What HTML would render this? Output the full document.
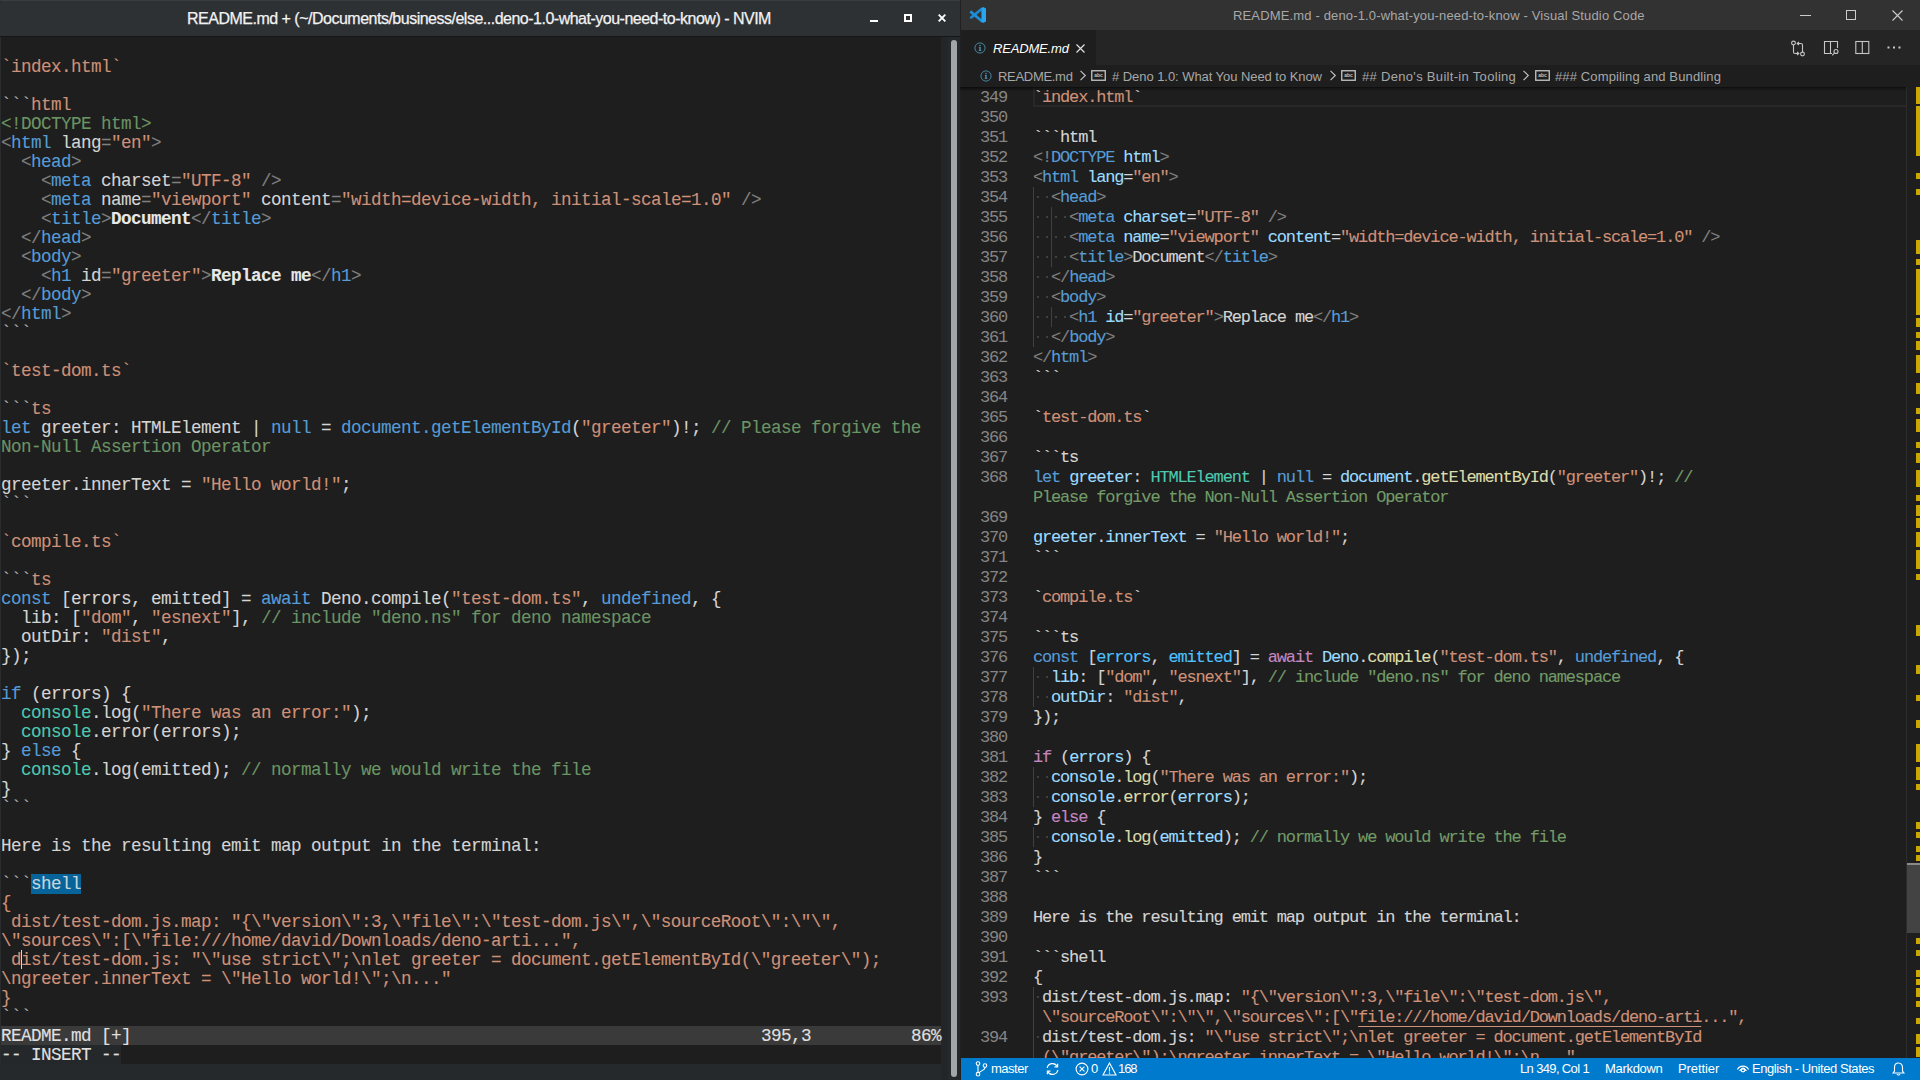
<!DOCTYPE html>
<html><head><meta charset="utf-8"><style>
*{margin:0;padding:0;box-sizing:border-box}
html,body{width:1920px;height:1080px;overflow:hidden;background:#000}
body{position:relative;font-family:"Liberation Sans",sans-serif}
.abs{position:absolute}
/* NVIM */
#nv{position:absolute;left:0;top:0;width:960px;height:1080px;background:#25292c}
#nvtitle{position:absolute;left:0;top:0;width:960px;height:36px;background:#2e3134;border-radius:4px 4px 0 0}
#nvline{position:absolute;left:0;top:36px;width:960px;height:1px;background:#141617}
#nvterm{position:absolute;left:0;top:37px;width:941px;height:1027px;background:#1e1e1e}
#nvsb{position:absolute;left:941px;top:37px;width:19px;height:1043px;background:#232629}
#nvthumb{position:absolute;left:951px;top:40px;width:6px;height:1037px;background:#a3a6a8;border-radius:3px}
#nvtxt{position:absolute;left:1px;top:39px;width:940px}
.nr{position:absolute;left:0;white-space:pre;-webkit-text-stroke-width:0.1px;font-family:"Liberation Mono",monospace;font-size:17.6px;letter-spacing:-0.56px;line-height:19px;height:19px;color:#d4d4d4}
.nd{color:#d4d4d4}.nt{color:#569cd6}.np{color:#808080}.ns{color:#ce9178}.nc{color:#6b9464}.nb{color:#e8e8e8;font-weight:bold}
.nk{color:#569cd6}.no{color:#4ec9b0}.nf{color:#b0b0b0}.nhl{background:#06649a;color:#c8d6dc}
#nvstat{position:absolute;left:0;top:1026px;width:941px;height:19px;background:#3a3a3a}
#nvins{position:absolute;left:0;top:1045px;width:941px;height:19px;background:#1e1e1e}
#nvtitletext{position:absolute;left:0;top:0;width:960px;height:36px;line-height:36px;text-align:center;color:#f0f0f0;font-size:14.5px;font-weight:bold}
/* VS */
#vs{position:absolute;left:960px;top:0;width:960px;height:1080px;background:#1e1e1e}
#vstitle{position:absolute;left:0;top:0;width:960px;height:30px;background:#323233}
#vstabs{position:absolute;left:0;top:30px;width:960px;height:35px;background:#252526}
#vstab{position:absolute;left:0;top:0;width:136px;height:35px;background:#1e1e1e}
#vscrumb{position:absolute;left:0;top:65px;width:960px;height:22px;background:#1e1e1e}
.vr{position:absolute;left:1033px;white-space:pre;-webkit-text-stroke-width:0.1px;font-family:"Liberation Mono",monospace;font-size:17px;letter-spacing:-1.1717px;line-height:20px;height:20px;color:#d4d4d4}
.ln{position:absolute;left:960px;width:47px;text-align:right;font-family:"Liberation Mono",monospace;font-size:17px;letter-spacing:-1.1717px;line-height:20px;height:20px;color:#858585}
.vd{color:#d4d4d4}.vp{color:#808080}.vt{color:#569cd6}.va{color:#9cdcfe}.vs{color:#ce9178}.vc{color:#729b68}.vy{color:#dcdcaa}.vg{color:#4ec9b0}.vk{color:#c586c0}.vb{color:#4fc1ff}
.vu{color:#ce9178;text-decoration:underline;text-underline-offset:4px}
.dot{position:absolute;width:2px;height:2px;background:#404040}
.guide{position:absolute;width:1px;background:#404040}
#vsstatus{position:absolute;left:1px;top:1058px;width:959px;height:22px;background:#007acc;color:#fff;font-size:12px}
.ui{position:absolute;white-space:pre;font-family:"Liberation Sans",sans-serif}
</style></head>
<body>
<div id="nv">
 <div id="nvtitle"></div>
 <div class="ui" id="t_nvtitle" style="left:187px;top:9px;font-size:16px;line-height:20px;letter-spacing:-0.499px;color:#f2f2f2;-webkit-text-stroke:0.25px #f2f2f2">README.md + (~/Documents/business/else...deno-1.0-what-you-need-to-know) - NVIM</div>
 <div id="nvline"></div>
 <div id="nvterm"></div>
 <div id="nvsb"></div>
 
 <div id="nvstat"></div>
 <div id="nvins"></div><div class="abs" style="left:0;top:1045px;width:121px;height:19px;background:#25282b"></div>
<div class="abs" style="left:0;top:0;width:960px;height:1px;background:#3a3d40;border-radius:3px 0 0 0"></div>
<div class="abs" style="left:0;top:37px;width:1px;height:1027px;background:#2a2b2c"></div>
<div class="abs" style="left:948px;top:37px;width:12px;height:1043px;background:#25292c"></div>
<div class="abs" style="left:870px;top:20px;width:8px;height:2px;background:#ffffff"></div>
<div class="abs" style="left:904px;top:14px;width:8px;height:8px;border:2px solid #ffffff"></div>
<svg class="abs" style="left:938px;top:14px" width="8" height="8" viewBox="0 0 8 8"><path d="M0.7 0.7 L7.3 7.3 M7.3 0.7 L0.7 7.3" stroke="#ffffff" stroke-width="1.9"/></svg>
<div class="nr" style="left:1px;top:1027px;color:#e0e0e0">README.md [+]</div>
<div class="nr" style="left:761px;top:1027px;color:#e0e0e0">395,3</div>
<div class="nr" style="left:911px;top:1027px;color:#e0e0e0">86%</div>
<div class="nr" style="left:1px;top:1046px;color:#e0e0e0">-- INSERT --</div>
<div class="abs" style="left:21px;top:950px;width:1px;height:19px;background:#d4d4d4"></div>
 <div id="nvthumb"></div>
 <div id="nvtxt">
<div class="nr" style="top:19px"><span class="ns">`</span><span class="ns">index.html</span><span class="ns">`</span></div>
<div class="nr" style="top:57px"><span class="nf">```</span><span class="ns">html</span></div>
<div class="nr" style="top:76px"><span class="nc">&lt;!DOCTYPE html&gt;</span></div>
<div class="nr" style="top:95px"><span class="np">&lt;</span><span class="nt">html</span><span class="nd"> lang</span><span class="np">=</span><span class="ns">"en"</span><span class="np">&gt;</span></div>
<div class="nr" style="top:114px"><span class="np">  &lt;</span><span class="nt">head</span><span class="np">&gt;</span></div>
<div class="nr" style="top:133px"><span class="np">    &lt;</span><span class="nt">meta</span><span class="nd"> charset</span><span class="np">=</span><span class="ns">"UTF-8"</span><span class="np"> /&gt;</span></div>
<div class="nr" style="top:152px"><span class="np">    &lt;</span><span class="nt">meta</span><span class="nd"> name</span><span class="np">=</span><span class="ns">"viewport"</span><span class="nd"> content</span><span class="np">=</span><span class="ns">"width=device-width, initial-scale=1.0"</span><span class="np"> /&gt;</span></div>
<div class="nr" style="top:171px"><span class="np">    &lt;</span><span class="nt">title</span><span class="np">&gt;</span><span class="nb">Document</span><span class="np">&lt;/</span><span class="nt">title</span><span class="np">&gt;</span></div>
<div class="nr" style="top:190px"><span class="np">  &lt;/</span><span class="nt">head</span><span class="np">&gt;</span></div>
<div class="nr" style="top:209px"><span class="np">  &lt;</span><span class="nt">body</span><span class="np">&gt;</span></div>
<div class="nr" style="top:228px"><span class="np">    &lt;</span><span class="nt">h1</span><span class="nd"> id</span><span class="np">=</span><span class="ns">"greeter"</span><span class="np">&gt;</span><span class="nb">Replace me</span><span class="np">&lt;/</span><span class="nt">h1</span><span class="np">&gt;</span></div>
<div class="nr" style="top:247px"><span class="np">  &lt;/</span><span class="nt">body</span><span class="np">&gt;</span></div>
<div class="nr" style="top:266px"><span class="np">&lt;/</span><span class="nt">html</span><span class="np">&gt;</span></div>
<div class="nr" style="top:285px"><span class="nf">```</span></div>
<div class="nr" style="top:323px"><span class="ns">`</span><span class="ns">test-dom.ts</span><span class="ns">`</span></div>
<div class="nr" style="top:361px"><span class="nf">```</span><span class="ns">ts</span></div>
<div class="nr" style="top:380px"><span class="nk">let</span><span class="nd"> greeter: HTMLElement | </span><span class="nk">null</span><span class="nd"> = </span><span class="nk">document.getElementById</span><span class="nd">(</span><span class="ns">"greeter"</span><span class="nd">)!; </span><span class="nc">// Please forgive the</span></div>
<div class="nr" style="top:399px"><span class="nc">Non-Null Assertion Operator</span></div>
<div class="nr" style="top:437px"><span class="nd">greeter.innerText = </span><span class="ns">"Hello world!"</span><span class="nd">;</span></div>
<div class="nr" style="top:456px"><span class="nf">```</span></div>
<div class="nr" style="top:494px"><span class="ns">`</span><span class="ns">compile.ts</span><span class="ns">`</span></div>
<div class="nr" style="top:532px"><span class="nf">```</span><span class="ns">ts</span></div>
<div class="nr" style="top:551px"><span class="nk">const</span><span class="nd"> [errors, emitted] = </span><span class="nk">await</span><span class="nd"> Deno.compile(</span><span class="ns">"test-dom.ts"</span><span class="nd">, </span><span class="nk">undefined</span><span class="nd">, {</span></div>
<div class="nr" style="top:570px"><span class="nd">  lib: [</span><span class="ns">"dom"</span><span class="nd">, </span><span class="ns">"esnext"</span><span class="nd">], </span><span class="nc">// include "deno.ns" for deno namespace</span></div>
<div class="nr" style="top:589px"><span class="nd">  outDir: </span><span class="ns">"dist"</span><span class="nd">,</span></div>
<div class="nr" style="top:608px"><span class="nd">});</span></div>
<div class="nr" style="top:646px"><span class="nk">if</span><span class="nd"> (errors) {</span></div>
<div class="nr" style="top:665px"><span class="nd">  </span><span class="no">console</span><span class="nd">.log(</span><span class="ns">"There was an error:"</span><span class="nd">);</span></div>
<div class="nr" style="top:684px"><span class="nd">  </span><span class="no">console</span><span class="nd">.error(errors);</span></div>
<div class="nr" style="top:703px"><span class="nd">} </span><span class="nk">else</span><span class="nd"> {</span></div>
<div class="nr" style="top:722px"><span class="nd">  </span><span class="no">console</span><span class="nd">.log(emitted); </span><span class="nc">// normally we would write the file</span></div>
<div class="nr" style="top:741px"><span class="nd">}</span></div>
<div class="nr" style="top:760px"><span class="nf">```</span></div>
<div class="nr" style="top:798px"><span class="nd">Here is the resulting emit map output in the terminal:</span></div>
<div class="nr" style="top:836px"><span class="nf">```</span><span class="nhl">shell</span></div>
<div class="nr" style="top:855px"><span class="ns">{</span></div>
<div class="nr" style="top:874px"><span class="ns"> dist/test-dom.js.map: "{\"version\":3,\"file\":\"test-dom.js\",\"sourceRoot\":\"\",</span></div>
<div class="nr" style="top:893px"><span class="ns">\"sources\":[\"file:///home/david/Downloads/deno-arti...",</span></div>
<div class="nr" style="top:912px"><span class="ns"> dist/test-dom.js: "\"use strict\";\nlet greeter = document.getElementById(\"greeter\");</span></div>
<div class="nr" style="top:931px"><span class="ns">\ngreeter.innerText = \"Hello world!\";\n..."</span></div>
<div class="nr" style="top:950px"><span class="ns">}</span></div>
<div class="nr" style="top:969px"><span class="nf">```</span></div>
 </div>
</div>
<div id="vs">
 <div id="vstitle"></div>
 <div id="vstabs"><div id="vstab"></div></div>
 <div id="vscrumb"></div>
 <div id="vsstatus"></div>
</div>
<div id="vscode" style="position:absolute;left:960px;top:87px;width:946px;height:971px;overflow:hidden">
<div style="position:absolute;left:-960px;top:-87px">
<div class="guide" style="left:1033px;top:187px;height:160px"></div>
<div class="guide" style="left:1051px;top:207px;height:60px"></div>
<div class="guide" style="left:1051px;top:307px;height:20px"></div>
<div class="guide" style="left:1033px;top:667px;height:40px"></div>
<div class="guide" style="left:1033px;top:767px;height:40px"></div>
<div class="guide" style="left:1033px;top:827px;height:20px"></div>
<div class="guide" style="left:1033px;top:987px;height:80px"></div>
<div class="dot" style="left:1036.5px;top:196px"></div>
<div class="dot" style="left:1045.5px;top:196px"></div>
<div class="dot" style="left:1036.5px;top:216px"></div>
<div class="dot" style="left:1045.5px;top:216px"></div>
<div class="dot" style="left:1054.6px;top:216px"></div>
<div class="dot" style="left:1063.6px;top:216px"></div>
<div class="dot" style="left:1036.5px;top:236px"></div>
<div class="dot" style="left:1045.5px;top:236px"></div>
<div class="dot" style="left:1054.6px;top:236px"></div>
<div class="dot" style="left:1063.6px;top:236px"></div>
<div class="dot" style="left:1036.5px;top:256px"></div>
<div class="dot" style="left:1045.5px;top:256px"></div>
<div class="dot" style="left:1054.6px;top:256px"></div>
<div class="dot" style="left:1063.6px;top:256px"></div>
<div class="dot" style="left:1036.5px;top:276px"></div>
<div class="dot" style="left:1045.5px;top:276px"></div>
<div class="dot" style="left:1036.5px;top:296px"></div>
<div class="dot" style="left:1045.5px;top:296px"></div>
<div class="dot" style="left:1036.5px;top:316px"></div>
<div class="dot" style="left:1045.5px;top:316px"></div>
<div class="dot" style="left:1054.6px;top:316px"></div>
<div class="dot" style="left:1063.6px;top:316px"></div>
<div class="dot" style="left:1036.5px;top:336px"></div>
<div class="dot" style="left:1045.5px;top:336px"></div>
<div class="dot" style="left:1036.5px;top:676px"></div>
<div class="dot" style="left:1045.5px;top:676px"></div>
<div class="dot" style="left:1036.5px;top:696px"></div>
<div class="dot" style="left:1045.5px;top:696px"></div>
<div class="dot" style="left:1036.5px;top:776px"></div>
<div class="dot" style="left:1045.5px;top:776px"></div>
<div class="dot" style="left:1036.5px;top:796px"></div>
<div class="dot" style="left:1045.5px;top:796px"></div>
<div class="dot" style="left:1036.5px;top:836px"></div>
<div class="dot" style="left:1045.5px;top:836px"></div>
<div class="dot" style="left:1036.5px;top:996px"></div>
<div class="dot" style="left:1036.5px;top:1036px"></div>
<div class="ln" style="top:88px">349</div>
<div class="ln" style="top:108px">350</div>
<div class="ln" style="top:128px">351</div>
<div class="ln" style="top:148px">352</div>
<div class="ln" style="top:168px">353</div>
<div class="ln" style="top:188px">354</div>
<div class="ln" style="top:208px">355</div>
<div class="ln" style="top:228px">356</div>
<div class="ln" style="top:248px">357</div>
<div class="ln" style="top:268px">358</div>
<div class="ln" style="top:288px">359</div>
<div class="ln" style="top:308px">360</div>
<div class="ln" style="top:328px">361</div>
<div class="ln" style="top:348px">362</div>
<div class="ln" style="top:368px">363</div>
<div class="ln" style="top:388px">364</div>
<div class="ln" style="top:408px">365</div>
<div class="ln" style="top:428px">366</div>
<div class="ln" style="top:448px">367</div>
<div class="ln" style="top:468px">368</div>
<div class="ln" style="top:508px">369</div>
<div class="ln" style="top:528px">370</div>
<div class="ln" style="top:548px">371</div>
<div class="ln" style="top:568px">372</div>
<div class="ln" style="top:588px">373</div>
<div class="ln" style="top:608px">374</div>
<div class="ln" style="top:628px">375</div>
<div class="ln" style="top:648px">376</div>
<div class="ln" style="top:668px">377</div>
<div class="ln" style="top:688px">378</div>
<div class="ln" style="top:708px">379</div>
<div class="ln" style="top:728px">380</div>
<div class="ln" style="top:748px">381</div>
<div class="ln" style="top:768px">382</div>
<div class="ln" style="top:788px">383</div>
<div class="ln" style="top:808px">384</div>
<div class="ln" style="top:828px">385</div>
<div class="ln" style="top:848px">386</div>
<div class="ln" style="top:868px">387</div>
<div class="ln" style="top:888px">388</div>
<div class="ln" style="top:908px">389</div>
<div class="ln" style="top:928px">390</div>
<div class="ln" style="top:948px">391</div>
<div class="ln" style="top:968px">392</div>
<div class="ln" style="top:988px">393</div>
<div class="ln" style="top:1028px">394</div>
<div class="vr" style="top:88px"><span class="vd">`</span><span class="vs">index.html</span><span class="vd">`</span></div>
<div class="vr" style="top:128px"><span class="vd">```html</span></div>
<div class="vr" style="top:148px"><span class="vp">&lt;!</span><span class="vt">DOCTYPE</span><span class="va"> html</span><span class="vp">&gt;</span></div>
<div class="vr" style="top:168px"><span class="vp">&lt;</span><span class="vt">html</span><span class="va"> lang</span><span class="vd">=</span><span class="vs">"en"</span><span class="vp">&gt;</span></div>
<div class="vr" style="top:188px"><span class="vp">  &lt;</span><span class="vt">head</span><span class="vp">&gt;</span></div>
<div class="vr" style="top:208px"><span class="vp">    &lt;</span><span class="vt">meta</span><span class="va"> charset</span><span class="vd">=</span><span class="vs">"UTF-8"</span><span class="vp"> /&gt;</span></div>
<div class="vr" style="top:228px"><span class="vp">    &lt;</span><span class="vt">meta</span><span class="va"> name</span><span class="vd">=</span><span class="vs">"viewport"</span><span class="va"> content</span><span class="vd">=</span><span class="vs">"width=device-width, initial-scale=1.0"</span><span class="vp"> /&gt;</span></div>
<div class="vr" style="top:248px"><span class="vp">    &lt;</span><span class="vt">title</span><span class="vp">&gt;</span><span class="vd">Document</span><span class="vp">&lt;/</span><span class="vt">title</span><span class="vp">&gt;</span></div>
<div class="vr" style="top:268px"><span class="vp">  &lt;/</span><span class="vt">head</span><span class="vp">&gt;</span></div>
<div class="vr" style="top:288px"><span class="vp">  &lt;</span><span class="vt">body</span><span class="vp">&gt;</span></div>
<div class="vr" style="top:308px"><span class="vp">    &lt;</span><span class="vt">h1</span><span class="va"> id</span><span class="vd">=</span><span class="vs">"greeter"</span><span class="vp">&gt;</span><span class="vd">Replace me</span><span class="vp">&lt;/</span><span class="vt">h1</span><span class="vp">&gt;</span></div>
<div class="vr" style="top:328px"><span class="vp">  &lt;/</span><span class="vt">body</span><span class="vp">&gt;</span></div>
<div class="vr" style="top:348px"><span class="vp">&lt;/</span><span class="vt">html</span><span class="vp">&gt;</span></div>
<div class="vr" style="top:368px"><span class="vd">```</span></div>
<div class="vr" style="top:408px"><span class="vd">`</span><span class="vs">test-dom.ts</span><span class="vd">`</span></div>
<div class="vr" style="top:448px"><span class="vd">```ts</span></div>
<div class="vr" style="top:468px"><span class="vt">let</span><span class="vd"> </span><span class="va">greeter</span><span class="vd">: </span><span class="vg">HTMLElement</span><span class="vd"> | </span><span class="vt">null</span><span class="vd"> = </span><span class="va">document</span><span class="vd">.</span><span class="vy">getElementById</span><span class="vd">(</span><span class="vs">"greeter"</span><span class="vd">)!; </span><span class="vc">//</span></div>
<div class="vr" style="top:488px"><span class="vc">Please forgive the Non-Null Assertion Operator</span></div>
<div class="vr" style="top:528px"><span class="va">greeter</span><span class="vd">.</span><span class="va">innerText</span><span class="vd"> = </span><span class="vs">"Hello world!"</span><span class="vd">;</span></div>
<div class="vr" style="top:548px"><span class="vd">```</span></div>
<div class="vr" style="top:588px"><span class="vd">`</span><span class="vs">compile.ts</span><span class="vd">`</span></div>
<div class="vr" style="top:628px"><span class="vd">```ts</span></div>
<div class="vr" style="top:648px"><span class="vt">const</span><span class="vd"> [</span><span class="vb">errors</span><span class="vd">, </span><span class="vb">emitted</span><span class="vd">] = </span><span class="vk">await</span><span class="vd"> </span><span class="va">Deno</span><span class="vd">.</span><span class="vy">compile</span><span class="vd">(</span><span class="vs">"test-dom.ts"</span><span class="vd">, </span><span class="vt">undefined</span><span class="vd">, {</span></div>
<div class="vr" style="top:668px"><span class="vd">  </span><span class="va">lib</span><span class="vd">: [</span><span class="vs">"dom"</span><span class="vd">, </span><span class="vs">"esnext"</span><span class="vd">], </span><span class="vc">// include "deno.ns" for deno namespace</span></div>
<div class="vr" style="top:688px"><span class="vd">  </span><span class="va">outDir</span><span class="vd">: </span><span class="vs">"dist"</span><span class="vd">,</span></div>
<div class="vr" style="top:708px"><span class="vd">});</span></div>
<div class="vr" style="top:748px"><span class="vk">if</span><span class="vd"> (</span><span class="va">errors</span><span class="vd">) {</span></div>
<div class="vr" style="top:768px"><span class="vd">  </span><span class="va">console</span><span class="vd">.</span><span class="vy">log</span><span class="vd">(</span><span class="vs">"There was an error:"</span><span class="vd">);</span></div>
<div class="vr" style="top:788px"><span class="vd">  </span><span class="va">console</span><span class="vd">.</span><span class="vy">error</span><span class="vd">(</span><span class="va">errors</span><span class="vd">);</span></div>
<div class="vr" style="top:808px"><span class="vd">} </span><span class="vk">else</span><span class="vd"> {</span></div>
<div class="vr" style="top:828px"><span class="vd">  </span><span class="va">console</span><span class="vd">.</span><span class="vy">log</span><span class="vd">(</span><span class="va">emitted</span><span class="vd">); </span><span class="vc">// normally we would write the file</span></div>
<div class="vr" style="top:848px"><span class="vd">}</span></div>
<div class="vr" style="top:868px"><span class="vd">```</span></div>
<div class="vr" style="top:908px"><span class="vd">Here is the resulting emit map output in the terminal:</span></div>
<div class="vr" style="top:948px"><span class="vd">```shell</span></div>
<div class="vr" style="top:968px"><span class="vd">{</span></div>
<div class="vr" style="top:988px"><span class="vd"> dist/test-dom.js.map: </span><span class="vs">"{\"version\":3,\"file\":\"test-dom.js\",</span></div>
<div class="vr" style="top:1008px"><span class="vd"> </span><span class="vs">\"sourceRoot\":\"\",\"sources\":[\"</span><span class="vu">file:///home/david/Downloads/deno-arti</span><span class="vs">...",</span></div>
<div class="vr" style="top:1028px"><span class="vd"> dist/test-dom.js: </span><span class="vs">"\"use strict\";\nlet greeter = document.getElementById</span></div>
<div class="vr" style="top:1048px"><span class="vd"> </span><span class="vs">(\"greeter\");\ngreeter.innerText = \"Hello world!\";\n..."</span></div>
</div></div>
<div class="abs" style="left:960px;top:0;width:1px;height:1080px;background:#1f2022"></div>
<svg class="abs" style="left:969px;top:7px" width="18" height="16" viewBox="0 0 18 16"><path d="M13.6 1.2 L1.3 11.3" stroke="#1c88cf" stroke-width="2.7"/><path d="M13.6 14.8 L1.3 4.4" stroke="#1e8fd6" stroke-width="2.7"/><path d="M12.4 1.3 L14.2 0.1 L17 1.5 V14.5 L14.2 15.9 L12.4 14.7 Z" fill="#27a6f0"/></svg>
<div class="ui" id="t_vstitle" style="left:1233px;top:8px;font-size:13px;line-height:16px;letter-spacing:0.151px;color:#a8a8a8;">README.md - deno-1.0-what-you-need-to-know - Visual Studio Code</div>
<div class="abs" style="left:1800px;top:15px;width:11px;height:1px;background:#cccccc"></div>
<div class="abs" style="left:1846px;top:10px;width:10px;height:10px;border:1px solid #cccccc"></div>
<svg class="abs" style="left:1892px;top:10px" width="11" height="11" viewBox="0 0 11 11"><path d="M0.5 0.5 L10.5 10.5 M10.5 0.5 L0.5 10.5" stroke="#cccccc" stroke-width="1.1"/></svg>
<svg class="abs" style="left:974px;top:42px" width="12" height="12" viewBox="0 0 16 16"><circle cx="8" cy="8" r="6.8" fill="none" stroke="#519aba" stroke-width="1.1"/><rect x="7.1" y="6.6" width="1.8" height="5.2" fill="#519aba"/><rect x="6.2" y="11" width="3.6" height="0.9" fill="#519aba"/><rect x="6.4" y="6.6" width="1.5" height="0.9" fill="#519aba"/><circle cx="8" cy="4.6" r="1" fill="#519aba"/></svg>
<div class="ui" id="t_tab" style="left:993px;top:41px;font-size:13px;line-height:16px;letter-spacing:-0.179px;color:#ffffff;font-style:italic">README.md</div>
<svg class="abs" style="left:1076px;top:44px" width="9" height="9" viewBox="0 0 9 9"><path d="M0.5 0.5 L8.5 8.5 M8.5 0.5 L0.5 8.5" stroke="#e0e0e0" stroke-width="1.2"/></svg>
<svg class="abs" style="left:1790px;top:40px" width="16" height="17" viewBox="0 0 16 17" fill="none" stroke="#c5c5c5" stroke-width="1.1"><circle cx="3.5" cy="3" r="1.9"/><circle cx="12.5" cy="14" r="1.9"/><path d="M3.5 5 V12 C3.5 13 4 13.5 5 13.5 H8.5 M7 12 L8.8 13.5 L7 15"/><path d="M12.5 12 V5 C12.5 4 12 3.5 11 3.5 H7.5 M9 2 L7.2 3.5 L9 5"/></svg>
<svg class="abs" style="left:1823px;top:40px" width="16" height="16" viewBox="0 0 16 16" fill="none" stroke="#c5c5c5" stroke-width="1.1"><path d="M7.5 1.5 H1.5 V13.5 H7.5 V1.5 H14.5 V8"/><path d="M9 13.5 H7.5"/><circle cx="13" cy="11.5" r="2"/><path d="M11.6 12.9 L9.2 15.3"/></svg>
<svg class="abs" style="left:1855px;top:40px" width="15" height="15" viewBox="0 0 15 15" fill="none" stroke="#c5c5c5" stroke-width="1.1"><rect x="0.8" y="1.5" width="13" height="12"/><path d="M7.3 1.5 V13.5"/></svg>
<svg class="abs" style="left:1887px;top:46px" width="14" height="3" viewBox="0 0 14 3" fill="#c5c5c5"><rect x="0.5" y="0.5" width="2" height="2"/><rect x="6" y="0.5" width="2" height="2"/><rect x="11.5" y="0.5" width="2" height="2"/></svg>
<svg class="abs" style="left:980px;top:70px" width="12" height="12" viewBox="0 0 16 16"><circle cx="8" cy="8" r="6.8" fill="none" stroke="#519aba" stroke-width="1.1"/><rect x="7.1" y="6.6" width="1.8" height="5.2" fill="#519aba"/><rect x="6.2" y="11" width="3.6" height="0.9" fill="#519aba"/><rect x="6.4" y="6.6" width="1.5" height="0.9" fill="#519aba"/><circle cx="8" cy="4.6" r="1" fill="#519aba"/></svg>
<div class="ui" id="t_cr1" style="left:998px;top:69px;font-size:13px;line-height:16px;letter-spacing:-0.304px;color:#a8a8a8;">README.md</div>
<div class="ui" id="t_cr2" style="left:1112px;top:69px;font-size:13px;line-height:16px;letter-spacing:-0.055px;color:#a8a8a8;"># Deno 1.0: What You Need to Know</div>
<div class="ui" id="t_cr3" style="left:1362px;top:69px;font-size:13px;line-height:16px;letter-spacing:0.312px;color:#a8a8a8;">## Deno&#39;s Built-in Tooling</div>
<div class="ui" id="t_cr4" style="left:1555px;top:69px;font-size:13px;line-height:16px;letter-spacing:0.13px;color:#a8a8a8;">### Compiling and Bundling</div>
<svg class="abs" style="left:1079px;top:70px" width="8" height="11" viewBox="0 0 8 11"><path d="M1.5 0.8 L6.3 5.5 L1.5 10.2" fill="none" stroke="#c5c5c5" stroke-width="1.1"/></svg>
<svg class="abs" style="left:1329px;top:70px" width="8" height="11" viewBox="0 0 8 11"><path d="M1.5 0.8 L6.3 5.5 L1.5 10.2" fill="none" stroke="#c5c5c5" stroke-width="1.1"/></svg>
<svg class="abs" style="left:1522px;top:70px" width="8" height="11" viewBox="0 0 8 11"><path d="M1.5 0.8 L6.3 5.5 L1.5 10.2" fill="none" stroke="#c5c5c5" stroke-width="1.1"/></svg>
<svg class="abs" style="left:1091px;top:70px" width="15" height="11" viewBox="0 0 15 11"><rect x="0.75" y="0.75" width="13.5" height="9.5" fill="none" stroke="#c5c5c5" stroke-width="1.3"/><text x="7.5" y="6.6" font-family="Liberation Sans" font-size="5" font-weight="bold" fill="#c5c5c5" text-anchor="middle">abc</text></svg>
<svg class="abs" style="left:1341px;top:70px" width="15" height="11" viewBox="0 0 15 11"><rect x="0.75" y="0.75" width="13.5" height="9.5" fill="none" stroke="#c5c5c5" stroke-width="1.3"/><text x="7.5" y="6.6" font-family="Liberation Sans" font-size="5" font-weight="bold" fill="#c5c5c5" text-anchor="middle">abc</text></svg>
<svg class="abs" style="left:1535px;top:70px" width="15" height="11" viewBox="0 0 15 11"><rect x="0.75" y="0.75" width="13.5" height="9.5" fill="none" stroke="#c5c5c5" stroke-width="1.3"/><text x="7.5" y="6.6" font-family="Liberation Sans" font-size="5" font-weight="bold" fill="#c5c5c5" text-anchor="middle">abc</text></svg>
<div class="abs" style="left:1033px;top:87px;width:873px;height:20px;border:2px solid #282828;border-right:none"></div>
<div class="abs" style="left:960px;top:87px;width:946px;height:4px;background:linear-gradient(#0c0c0c,rgba(30,30,30,0))"></div>
<div class="abs" style="left:1906px;top:87px;width:1px;height:971px;background:#2c2c2c"></div>
<div class="abs" style="left:1907px;top:863px;width:13px;height:70px;background:#434343"></div>
<div class="abs" style="left:1907px;top:863px;width:13px;height:2px;background:#8a8a8a"></div>
<div class="abs" style="left:1916px;top:87px;width:4px;height:17px;background:#cca700"></div>
<div class="abs" style="left:1916px;top:106px;width:4px;height:50px;background:#cca700"></div>
<div class="abs" style="left:1916px;top:173px;width:4px;height:6px;background:#cca700"></div>
<div class="abs" style="left:1916px;top:189px;width:4px;height:6px;background:#cca700"></div>
<div class="abs" style="left:1916px;top:240px;width:4px;height:14px;background:#cca700"></div>
<div class="abs" style="left:1916px;top:259px;width:4px;height:6px;background:#cca700"></div>
<div class="abs" style="left:1916px;top:269px;width:4px;height:46px;background:#cca700"></div>
<div class="abs" style="left:1916px;top:318px;width:4px;height:9px;background:#cca700"></div>
<div class="abs" style="left:1916px;top:332px;width:4px;height:6px;background:#cca700"></div>
<div class="abs" style="left:1916px;top:341px;width:4px;height:9px;background:#cca700"></div>
<div class="abs" style="left:1916px;top:355px;width:4px;height:18px;background:#cca700"></div>
<div class="abs" style="left:1916px;top:383px;width:4px;height:11px;background:#cca700"></div>
<div class="abs" style="left:1916px;top:408px;width:4px;height:6px;background:#cca700"></div>
<div class="abs" style="left:1916px;top:419px;width:4px;height:13px;background:#cca700"></div>
<div class="abs" style="left:1916px;top:442px;width:4px;height:6px;background:#cca700"></div>
<div class="abs" style="left:1916px;top:453px;width:4px;height:10px;background:#cca700"></div>
<div class="abs" style="left:1916px;top:470px;width:4px;height:17px;background:#cca700"></div>
<div class="abs" style="left:1916px;top:495px;width:4px;height:6px;background:#cca700"></div>
<div class="abs" style="left:1916px;top:505px;width:4px;height:11px;background:#cca700"></div>
<div class="abs" style="left:1916px;top:518px;width:4px;height:10px;background:#cca700"></div>
<div class="abs" style="left:1916px;top:532px;width:4px;height:15px;background:#cca700"></div>
<div class="abs" style="left:1916px;top:550px;width:4px;height:19px;background:#cca700"></div>
<div class="abs" style="left:1916px;top:574px;width:4px;height:6px;background:#cca700"></div>
<div class="abs" style="left:1916px;top:625px;width:4px;height:11px;background:#cca700"></div>
<div class="abs" style="left:1916px;top:665px;width:4px;height:9px;background:#cca700"></div>
<div class="abs" style="left:1916px;top:695px;width:4px;height:6px;background:#cca700"></div>
<div class="abs" style="left:1916px;top:720px;width:4px;height:8px;background:#cca700"></div>
<div class="abs" style="left:1916px;top:744px;width:4px;height:18px;background:#cca700"></div>
<div class="abs" style="left:1916px;top:767px;width:4px;height:13px;background:#cca700"></div>
<div class="abs" style="left:1916px;top:784px;width:4px;height:6px;background:#cca700"></div>
<div class="abs" style="left:1916px;top:822px;width:4px;height:7px;background:#cca700"></div>
<div class="abs" style="left:1916px;top:832px;width:4px;height:6px;background:#cca700"></div>
<div class="abs" style="left:1916px;top:846px;width:4px;height:6px;background:#cca700"></div>
<div class="abs" style="left:1916px;top:855px;width:4px;height:6px;background:#cca700"></div>
<div class="abs" style="left:1916px;top:938px;width:4px;height:6px;background:#cca700"></div>
<div class="abs" style="left:1916px;top:950px;width:4px;height:6px;background:#cca700"></div>
<div class="abs" style="left:1916px;top:970px;width:4px;height:7px;background:#cca700"></div>
<div class="abs" style="left:1916px;top:979px;width:4px;height:6px;background:#cca700"></div>
<div class="abs" style="left:1916px;top:988px;width:4px;height:9px;background:#cca700"></div>
<div class="abs" style="left:1916px;top:1001px;width:4px;height:6px;background:#cca700"></div>
<div class="abs" style="left:1916px;top:1018px;width:4px;height:6px;background:#cca700"></div>
<div class="abs" style="left:1916px;top:1034px;width:4px;height:10px;background:#cca700"></div>
<div class="abs" style="left:1916px;top:1047px;width:4px;height:10px;background:#cca700"></div>
<div class="abs" style="left:961px;top:1058px;width:959px;height:22px;background:#007acc"></div>
<div class="ui" id="t_st1" style="left:991px;top:1061px;font-size:13px;line-height:16px;letter-spacing:-0.505px;color:#ffffff;">master</div>
<div class="ui" id="t_st2" style="left:1118px;top:1061px;font-size:13px;line-height:16px;letter-spacing:-1.043px;color:#ffffff;">168</div>
<div class="ui" id="t_st3" style="left:1520px;top:1061px;font-size:13px;line-height:16px;letter-spacing:-0.644px;color:#ffffff;">Ln 349, Col 1</div>
<div class="ui" id="t_st4" style="left:1605px;top:1061px;font-size:13px;line-height:16px;letter-spacing:-0.302px;color:#ffffff;">Markdown</div>
<div class="ui" id="t_st5" style="left:1678px;top:1061px;font-size:13px;line-height:16px;letter-spacing:-0.099px;color:#ffffff;">Prettier</div>
<div class="ui" id="t_st6" style="left:1752px;top:1061px;font-size:13px;line-height:16px;letter-spacing:-0.437px;color:#ffffff;">English - United States</div>
<div class="ui" style="left:1091px;top:1061px;font-size:13px;line-height:16px;color:#fff">0</div>
<svg class="abs" style="left:975px;top:1061px" width="13" height="16" viewBox="0 0 13 16" fill="none" stroke="#ffffff" stroke-width="1.1"><circle cx="3" cy="2.6" r="1.8"/><circle cx="3" cy="13.2" r="1.8"/><circle cx="10" cy="4.6" r="1.8"/><path d="M3 4.4 V11.4 M10 6.4 C10 9 7 9.2 4.2 11.6"/></svg>
<svg class="abs" style="left:1045px;top:1062px" width="15" height="14" viewBox="0 0 15 14" fill="none" stroke="#ffffff" stroke-width="1.2"><path d="M2.2 6 A5.3 5.3 0 0 1 12.2 4.6 M12.8 8 A5.3 5.3 0 0 1 2.8 9.4"/><path d="M12.6 1.8 V4.9 H9.5 M2.4 12.2 V9.1 H5.5"/></svg>
<svg class="abs" style="left:1075px;top:1062px" width="14" height="14" viewBox="0 0 14 14" fill="none" stroke="#ffffff" stroke-width="1.1"><circle cx="7" cy="7" r="5.9"/><path d="M4.6 4.6 L9.4 9.4 M9.4 4.6 L4.6 9.4"/></svg>
<svg class="abs" style="left:1102px;top:1062px" width="15" height="14" viewBox="0 0 15 14" fill="none" stroke="#ffffff" stroke-width="1.1"><path d="M7.5 1 L14 13 H1 Z"/><path d="M7.5 5 V9.5 M7.5 10.5 V11.8"/></svg>
<svg class="abs" style="left:1736px;top:1063px" width="14" height="12" viewBox="0 0 14 12" fill="none" stroke="#ffffff" stroke-width="1.2"><circle cx="7" cy="7" r="1.8"/><path d="M1.5 6.5 A6 5.5 0 0 1 12.5 6.5 M3.6 8 A3.6 3.2 0 0 1 10.4 8"/></svg>
<svg class="abs" style="left:1892px;top:1062px" width="13" height="14" viewBox="0 0 13 14" fill="none" stroke="#ffffff" stroke-width="1.1"><path d="M6.5 1 C3.8 1 2.5 3 2.5 5.5 V9 L1 11 H12 L10.5 9 V5.5 C10.5 3 9.2 1 6.5 1 Z M5 12.3 C5.4 13.2 7.6 13.2 8 12.3"/></svg>
</body></html>
